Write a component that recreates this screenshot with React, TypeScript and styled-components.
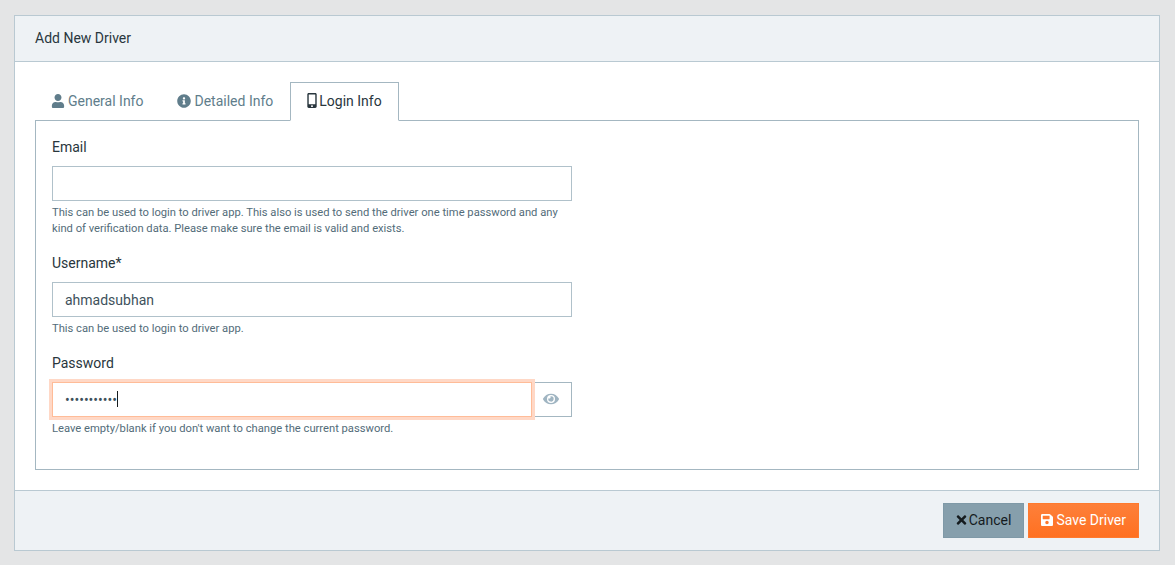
import styled, { createGlobalStyle } from 'styled-components'
import { FaUser, FaInfoCircle, FaMobileAlt, FaEye, FaTimes, FaSave } from 'react-icons/fa'

const GlobalStyle = createGlobalStyle`
  html, body {
    margin: 0;
    height: 100%;
    background: #e4e5e6;
  }
  * {
    box-sizing: border-box;
  }
  body {
    font-family: Roboto, "Liberation Sans", sans-serif;
    font-size: 14px;
    color: #29363d;
  }
`

const Page = styled.div`
  padding: 15px 15px 14px 14px;
`

const Card = styled.div`
  background: #fff;
  border: 1px solid #b9c9d2;
`

const CardHeader = styled.div`
  background: #eef2f5;
  border-bottom: 1px solid #b9c9d2;
  height: 46px;
  padding: 0 20px 2px;
  display: flex;
  align-items: center;
  font-size: 14px;
`

const CardBody = styled.div`
  padding: 20px;
`

const Tabs = styled.div`
  display: flex;
  height: 39px;
  margin: 0 0 -1px -1px;
  position: relative;
  z-index: 1;
`

const Tab = styled.div<{ $active?: boolean }>`
  display: flex;
  align-items: center;
  gap: ${p => (p.$active ? '2px' : '3px')};
  height: 39px;
  padding: 0 16px 2px;
  font-size: 14px;
  color: ${p => (p.$active ? '#29363d' : '#607d8b')};
  background: ${p => (p.$active ? '#fff' : 'transparent')};
  border: 1px solid ${p => (p.$active ? '#a4b7c1' : 'transparent')};
  border-bottom-color: ${p => (p.$active ? '#fff' : 'transparent')};

  svg {
    font-size: 14px;
  }
`

const PhoneIcon = styled(FaMobileAlt)`
  width: 10px;
  height: 15px;
`

const TabPane = styled.div`
  border: 1px solid #a4b7c1;
  height: 350px;
  padding: 16px;
`

const Field = styled.div`
  width: 520px;
  margin-bottom: 16px;
`

const Label = styled.label`
  display: block;
  font-size: 14px;
  line-height: 21px;
  margin-bottom: 8px;
`

const TextInput = styled.input`
  display: block;
  width: 100%;
  height: 35px;
  padding: 0 12px;
  border: 1px solid #b0c1ca;
  border-radius: 0;
  outline: none;
  background: #fff;
  font-family: inherit;
  font-size: 14px;
  color: #3e515b;

  &:focus {
    border-color: #ffbc98;
    box-shadow: 0 0 0 3px #ffd8c6;
    position: relative;
    z-index: 1;
  }
`

const InputGroup = styled.div`
  display: flex;
  position: relative;
`

const PasswordInput = styled(TextInput)`
  flex: 1;
  width: auto;
`

const Caret = styled.span`
  position: absolute;
  left: 65px;
  top: 9px;
  width: 1px;
  height: 16px;
  background: #151b1e;
  z-index: 2;
`

const Addon = styled.span`
  width: 41px;
  height: 35px;
  margin-left: -1px;
  padding: 0 2px 2px 0;
  display: flex;
  align-items: center;
  justify-content: center;
  border: 1px solid #a4b7c1;
  color: #a0b5c2;
  font-size: 16px;
`

const Help = styled.small`
  display: block;
  margin-top: 4px;
  font-size: 11.2px;
  line-height: 16px;
  color: #536c79;
`

const CardFooter = styled.div`
  background: #eef2f5;
  border-top: 1px solid #b9c9d2;
  height: 60px;
  padding: 12px 20px;
  display: flex;
  justify-content: flex-end;
  gap: 4px;
`

const Button = styled.button<{ $tone: 'cancel' | 'save' }>`
  display: flex;
  align-items: center;
  gap: ${p => (p.$tone === 'save' ? '3px' : '2px')};
  height: 35px;
  padding: 0 12px 2px;
  border: 1px solid ${p => (p.$tone === 'save' ? '#ff7a2e' : '#7f99a7')};
  background: ${p =>
    p.$tone === 'save'
      ? 'linear-gradient(#fd803a, #ff7021)'
      : '#869fac'};
  color: ${p => (p.$tone === 'save' ? '#fff' : '#151b1e')};
  font-family: inherit;
  font-size: 14px;

  svg {
    width: ${p => (p.$tone === 'save' ? '12px' : '11px')};
    height: 14px;
  }
`

function App() {
  return (
    <Page>
      <GlobalStyle />
      <Card>
        <CardHeader>Add New Driver</CardHeader>
        <CardBody>
          <Tabs>
            <Tab><FaUser />General Info</Tab>
            <Tab><FaInfoCircle />Detailed Info</Tab>
            <Tab $active><PhoneIcon />Login Info</Tab>
          </Tabs>
          <TabPane>
            <Field>
              <Label>Email</Label>
              <TextInput type="text" />
              <Help>
                This can be used to login to driver app. This also is used to send the driver one time password and any
                kind of verification data. Please make sure the email is valid and exists.
              </Help>
            </Field>
            <Field>
              <Label>Username*</Label>
              <TextInput type="text" defaultValue="ahmadsubhan" />
              <Help>This can be used to login to driver app.</Help>
            </Field>
            <Field>
              <Label>Password</Label>
              <InputGroup>
                <PasswordInput type="password" defaultValue="ahmadsubhan" autoFocus />
                <Caret />
                <Addon><FaEye /></Addon>
              </InputGroup>
              <Help>Leave empty/blank if you don't want to change the current password.</Help>
            </Field>
          </TabPane>
        </CardBody>
        <CardFooter>
          <Button $tone="cancel"><FaTimes />Cancel</Button>
          <Button $tone="save"><FaSave />Save Driver</Button>
        </CardFooter>
      </Card>
    </Page>
  )
}

export default App
